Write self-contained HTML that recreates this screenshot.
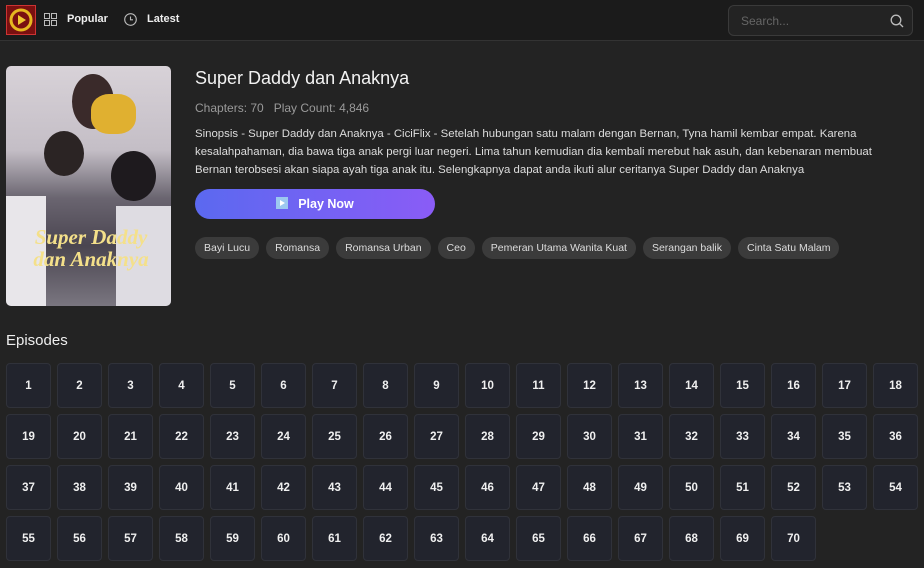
<!DOCTYPE html><html><head><style>
*{margin:0;padding:0;box-sizing:border-box}
body{width:924px;height:568px;overflow:hidden;background:#232323;font-family:"Liberation Sans",sans-serif;color:#fff;position:relative}
.hdr{position:absolute;left:0;top:0;width:924px;height:41px;background:#1b1b1b;border-bottom:1px solid #333}
.logo{position:absolute;left:6px;top:5px;width:30px;height:30px;background:#7a1010;border:1px solid #c33}
.nav{position:absolute;top:13px;font-size:11px;font-weight:bold;color:#eee}
.search{position:absolute;left:728px;top:5px;width:185px;height:31px;border:1px solid #3a3a3a;border-radius:6px;background:#232323}
.search span{position:absolute;left:12px;top:8px;font-size:12px;color:#666}
.poster{position:absolute;left:6px;top:66px;width:165px;height:240px;border-radius:5px;overflow:hidden;background:linear-gradient(180deg,#d8d2d8 0%,#c4bec6 35%,#6a6570 55%,#4a4550 75%,#7a7680 100%)}
h1{position:absolute;left:195px;top:68px;font-size:18px;font-weight:normal;color:#f2f2f2}
.meta{position:absolute;left:195px;top:101px;font-size:12px;color:#9a9a9a}
.syn{position:absolute;left:195px;top:125px;width:712px;font-size:11.4px;line-height:18px;color:#ddd}
.play{position:absolute;left:195px;top:189px;width:240px;height:30px;border-radius:15px;background:linear-gradient(90deg,#5b69f0,#8a5cf6);font-size:12.5px;font-weight:bold;text-align:center;line-height:30px}
.tags{position:absolute;left:195px;top:237px;display:flex;gap:7px}
.tags span{background:#3b3b3b;border-radius:11px;height:22px;line-height:22px;padding:0 9px;font-size:10.5px;color:#ddd}
.ep{position:absolute;left:6px;top:332px;font-size:15px;color:#eee}
.grid{position:absolute;left:6px;top:363px;display:grid;grid-template-columns:repeat(18,45px);grid-auto-rows:45px;gap:6px}
.grid div{background:#22242d;border:1px solid #30323a;border-radius:4px;font-size:11.5px;font-weight:bold;display:flex;align-items:center;justify-content:center;color:#f0f0f0}
</style></head><body>
<div class="hdr">
<div class="logo"><svg width="28" height="28" viewBox="0 0 28 28"><circle cx="14" cy="14" r="10" fill="none" stroke="#e6b820" stroke-width="3"/><path d="M11 9 L19 14 L11 19Z" fill="#f0c830"/></svg></div>
<svg style="position:absolute;left:44px;top:13px" width="13" height="13" viewBox="0 0 13 13" fill="none" stroke="#bbb" stroke-width="1"><rect x="0.5" y="0.5" width="5" height="5"/><rect x="7.5" y="0.5" width="5" height="5"/><rect x="0.5" y="7.5" width="5" height="5"/><rect x="7.5" y="7.5" width="5" height="5"/></svg>
<div class="nav" style="left:67px">Popular</div>
<svg style="position:absolute;left:124px;top:13px" width="13" height="13" viewBox="0 0 13 13" fill="none" stroke="#bbb" stroke-width="1.1"><circle cx="6.5" cy="6.5" r="5.8"/><path d="M6.5 3.5V6.8H9"/></svg>
<div class="nav" style="left:147px">Latest</div>
<div class="search"><span>Search...</span><svg style="position:absolute;left:161px;top:8px" width="14" height="14" viewBox="0 0 14 14" fill="none" stroke="#bbb" stroke-width="1.3"><circle cx="6" cy="6" r="4.8"/><path d="M9.5 9.5L13 13"/></svg></div>
</div>
<div class="poster">
<div style="position:absolute;left:66px;top:8px;width:42px;height:55px;border-radius:50%;background:#3a2a2a"></div>
<div style="position:absolute;left:85px;top:28px;width:45px;height:40px;border-radius:40%;background:#e0b030"></div>
<div style="position:absolute;left:38px;top:65px;width:40px;height:45px;border-radius:50%;background:#2b2424"></div>
<div style="position:absolute;left:105px;top:85px;width:45px;height:50px;border-radius:50%;background:#1e1a1e"></div>
<div style="position:absolute;left:0;top:130px;width:40px;height:110px;background:#e8e6ea"></div>
<div style="position:absolute;left:110px;top:140px;width:55px;height:100px;background:#dedce2"></div>
<div style="position:absolute;left:15px;top:160px;font-family:'Liberation Serif',serif;font-style:italic;font-weight:bold;color:#f4e08a;font-size:21px;line-height:22px;text-align:center;width:140px">Super Daddy<br>dan Anaknya</div>
</div>
<h1>Super Daddy dan Anaknya</h1>
<div class="meta">Chapters: 70 &nbsp;&nbsp;Play Count: 4,846</div>
<div class="syn">Sinopsis - Super Daddy dan Anaknya - CiciFlix - Setelah hubungan satu malam dengan Bernan, Tyna hamil kembar empat. Karena kesalahpahaman, dia bawa tiga anak pergi luar negeri. Lima tahun kemudian dia kembali merebut hak asuh, dan kebenaran membuat Bernan terobsesi akan siapa ayah tiga anak itu. Selengkapnya dapat anda ikuti alur ceritanya Super Daddy dan Anaknya</div>
<div class="play"><span style="display:inline-block;width:12px;height:12px;background:#9cc8f0;vertical-align:-1px;margin-right:10px;position:relative"><span style="position:absolute;left:4px;top:3px;border-left:5px solid #fff;border-top:3px solid transparent;border-bottom:3px solid transparent"></span></span>Play Now</div>
<div class="tags"><span>Bayi Lucu</span><span>Romansa</span><span>Romansa Urban</span><span>Ceo</span><span>Pemeran Utama Wanita Kuat</span><span>Serangan balik</span><span>Cinta Satu Malam</span></div>
<div class="ep">Episodes</div>
<div class="grid">
<div>1</div><div>2</div><div>3</div><div>4</div><div>5</div><div>6</div><div>7</div><div>8</div><div>9</div><div>10</div><div>11</div><div>12</div><div>13</div><div>14</div><div>15</div><div>16</div><div>17</div><div>18</div>
<div>19</div><div>20</div><div>21</div><div>22</div><div>23</div><div>24</div><div>25</div><div>26</div><div>27</div><div>28</div><div>29</div><div>30</div><div>31</div><div>32</div><div>33</div><div>34</div><div>35</div><div>36</div>
<div>37</div><div>38</div><div>39</div><div>40</div><div>41</div><div>42</div><div>43</div><div>44</div><div>45</div><div>46</div><div>47</div><div>48</div><div>49</div><div>50</div><div>51</div><div>52</div><div>53</div><div>54</div>
<div>55</div><div>56</div><div>57</div><div>58</div><div>59</div><div>60</div><div>61</div><div>62</div><div>63</div><div>64</div><div>65</div><div>66</div><div>67</div><div>68</div><div>69</div><div>70</div>
</div>
</body></html>
